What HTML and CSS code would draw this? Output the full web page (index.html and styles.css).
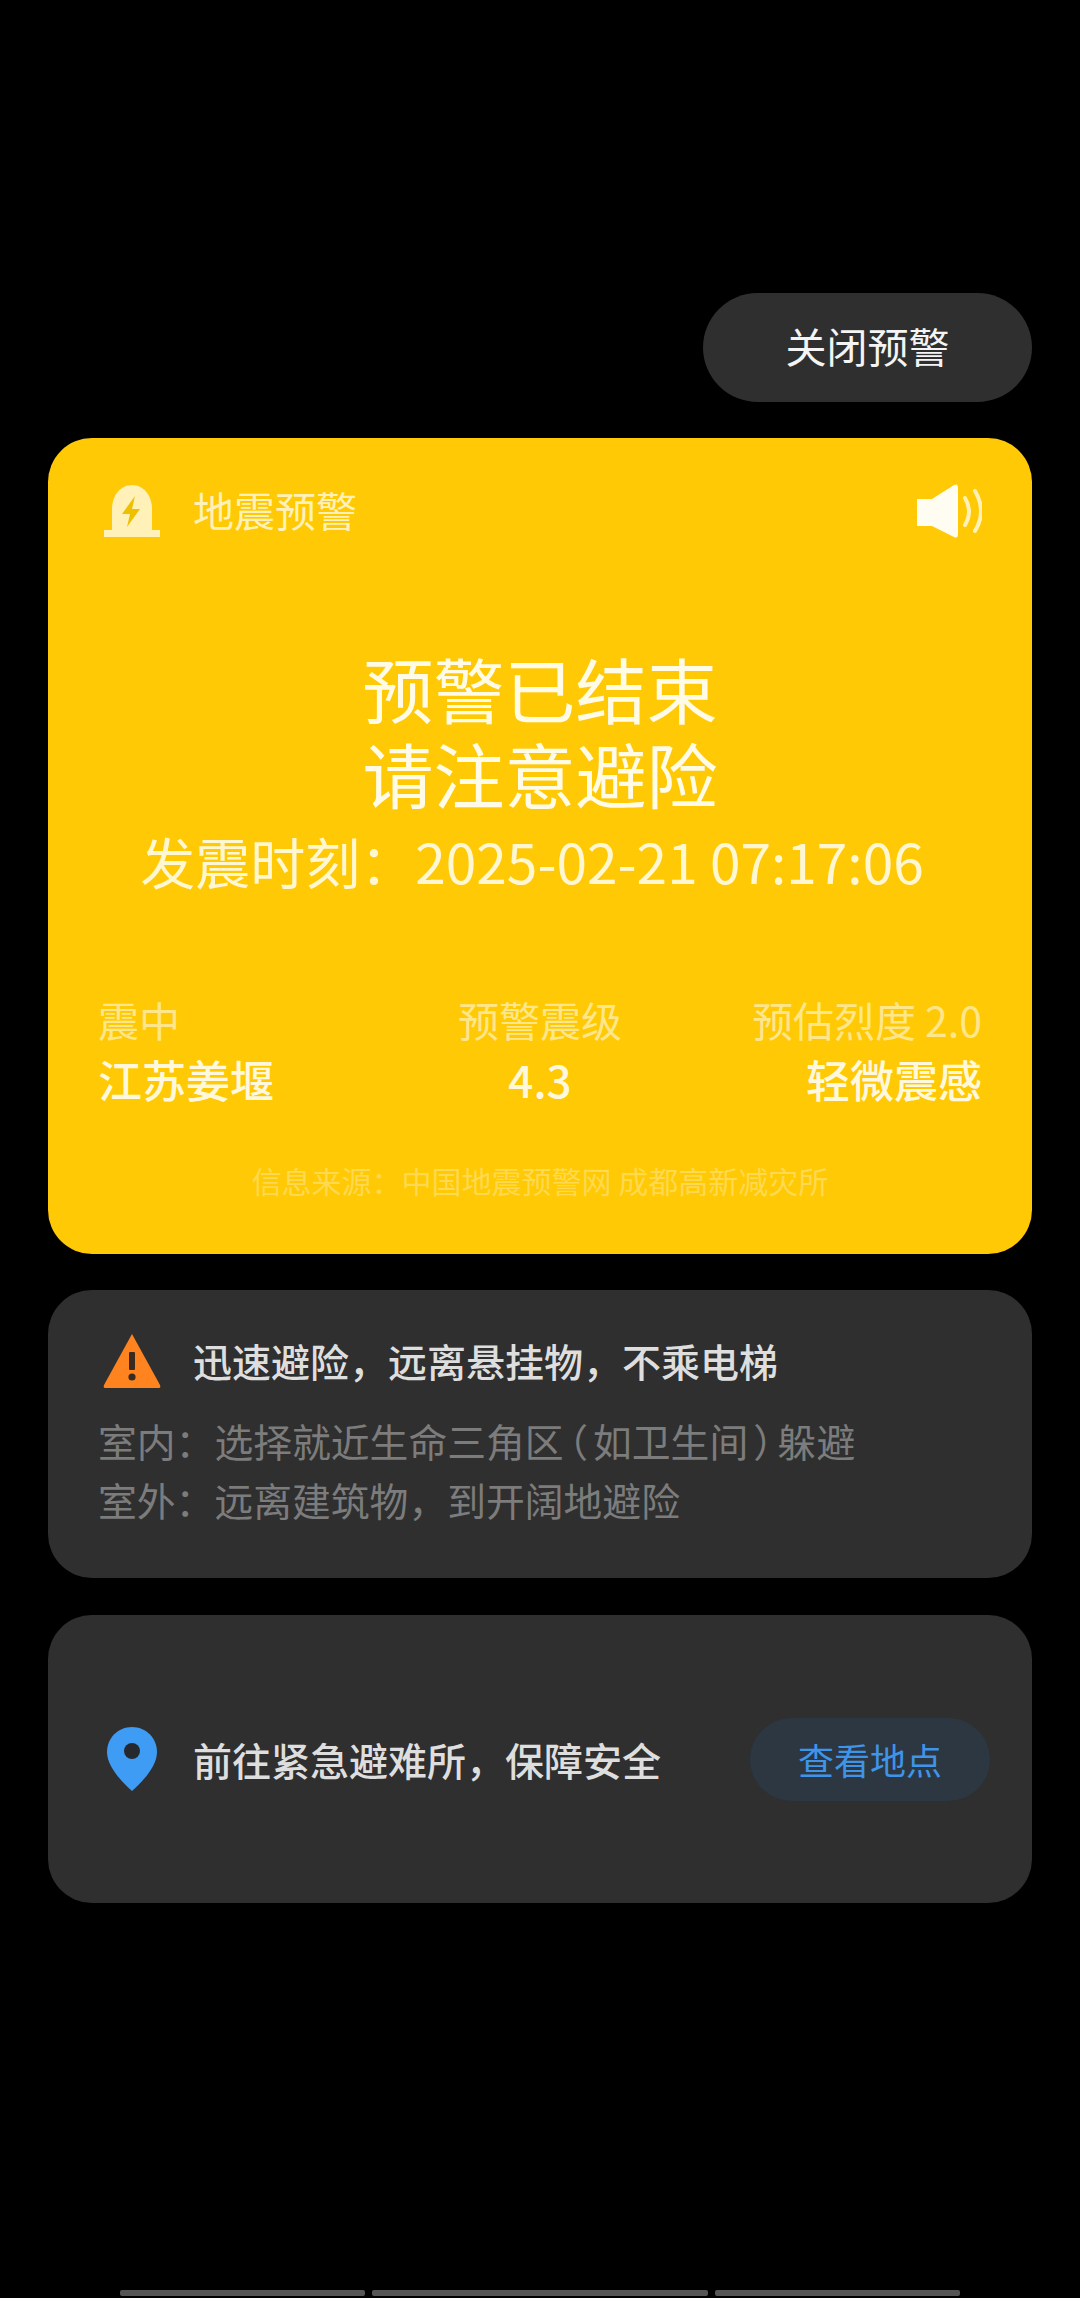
FILE: index.html
```html
<!DOCTYPE html>
<html lang="zh-CN">
<head>
    <meta charset="UTF-8">
    <meta name="viewport" content="width=device-width, initial-scale=1.0">
    <title>地震预警</title>
    <link rel="stylesheet" href="styles.css">
</head>
<body>
    <div class="page">
        <div class="close-row">
            <div class="close-btn">关闭预警</div>
        </div>

        <div class="alert-card">
            <div class="alert-head">
                <div class="alert-brand">
                    <div class="icon-box">
                        <svg width="56" height="52" viewBox="0 0 56 52">
                            <path fill="#fff1b8" d="M8 46V24C8 11 16 0 28 0s20 11 20 24v22z"/>
                            <rect fill="#fff1b8" y="45" width="56" height="7"/>
                            <path fill="#efc000" d="M31 11 18 29h8l-3 13 13-18h-8z"/>
                        </svg>
                    </div>
                    <span class="alert-name">地震预警</span>
                </div>
                <svg class="speaker" width="66" height="54" viewBox="0 0 66 54">
                    <path fill="#fffdf2" d="M1 15h15L38 1q4-2 4 3v46q0 5-4 3L16 42H1z"/>
                    <path fill="none" stroke="#fff1b8" stroke-width="4" stroke-linecap="round" d="M49 14q8 13 0 27M59 7q12 20 0 40"/>
                </svg>
            </div>

            <div class="alert-main">
                <h1>预警已结束<br>请注意避险</h1>
                <p class="alert-time">发震时刻：2025-02-21 07:17:06</p>
            </div>

            <div class="stats">
                <div class="stat">
                    <div class="stat-label">震中</div>
                    <div class="stat-value">江苏姜堰</div>
                </div>
                <div class="stat stat-center">
                    <div class="stat-label">预警震级</div>
                    <div class="stat-value">4.3</div>
                </div>
                <div class="stat stat-right">
                    <div class="stat-label">预估烈度 2.0</div>
                    <div class="stat-value">轻微震感</div>
                </div>
            </div>

            <div class="source">信息来源：中国地震预警网 成都高新减灾所</div>
        </div>

        <div class="info-card">
            <div class="info-title">
                <div class="icon-box">
                    <svg width="58" height="55" viewBox="0 0 58 55">
                        <path fill="#ff8420" d="M29 1 57 52q1 3-1 3H2q-2 0-1-3z"/>
                        <rect fill="#3a2b20" x="26" y="19" width="6" height="18" rx="1"/>
                        <circle fill="#3a2b20" cx="29" cy="44" r="3.6"/>
                    </svg>
                </div>
                <span>迅速避险，远离悬挂物，不乘电梯</span>
            </div>
            <div class="info-lines">
                <p>室内：选择就近生命三角区<span class="half">（</span>如卫生间<span class="half">）</span>躲避</p>
                <p>室外：远离建筑物，到开阔地避险</p>
            </div>
        </div>

        <div class="info-card shelter-card">
            <div class="info-title">
                <div class="icon-box">
                    <svg width="50" height="64" viewBox="0 0 50 64">
                        <path fill="#3f9cf5" d="M25 0c14 0 25 11 25 25 0 14-13 28-25 39C13 53 0 39 0 25 0 11 11 0 25 0z"/>
                        <circle fill="#25292d" cx="25" cy="24" r="8"/>
                    </svg>
                </div>
                <span>前往紧急避难所，保障安全</span>
            </div>
            <div class="place-btn">查看地点</div>
        </div>

        <div class="nav-bars">
            <span class="nav-short"></span>
            <span class="nav-long"></span>
            <span class="nav-short"></span>
        </div>
    </div>
</body>
</html>
```

FILE: styles.css
```css
* {
    box-sizing: border-box;
}

body {
    margin: 0;
    background: #000;
    font-family: "Noto Sans CJK SC", "Noto Sans", sans-serif;
}

.page {
    height: 2298px;
    padding: 293px 48px 0;
    display: flex;
    flex-direction: column;
    overflow: hidden;
}

/* Close button */
.close-row {
    display: flex;
    justify-content: flex-end;
    margin-bottom: 36px;
}

.close-btn {
    width: 329px;
    height: 109px;
    padding-bottom: 5px;
    border-radius: 55px;
    background: #2f2f2f;
    color: #f4f4f4;
    font-size: 41px;
    display: flex;
    align-items: center;
    justify-content: center;
}

/* Yellow alert card */
.alert-card {
    height: 816px;
    background: #ffc905;
    border-radius: 44px;
    padding: 44px 50px 0;
    color: #fff6d2;
    margin-bottom: 36px;
}

.alert-head {
    display: flex;
    justify-content: space-between;
    align-items: center;
    height: 58px;
}

.alert-brand {
    display: flex;
    align-items: center;
    gap: 27px;
}

.icon-box {
    width: 68px;
    flex-shrink: 0;
    display: flex;
    justify-content: center;
}

.alert-name {
    font-size: 41px;
    padding-bottom: 5px;
    color: #fff1b8;
}

.alert-main {
    text-align: center;
    margin-top: 105px;
}

.alert-main h1 {
    margin: 0;
    font-size: 71px;
    font-weight: 400;
    line-height: 85px;
    color: #fffbe6;
}

.alert-time {
    margin: 0;
    padding-right: 16px;
    font-size: 55px;
    line-height: 90px;
}

.stats {
    display: grid;
    grid-template-columns: 1fr 1fr 1fr;
    margin-top: 83px;
}

.stat-center {
    text-align: center;
}

.stat-right {
    text-align: right;
}

.stat-label {
    font-size: 41px;
    line-height: 62px;
    color: #ffe68a;
}

.stat-value {
    font-size: 44px;
    line-height: 58px;
    font-weight: 500;
    color: #fff8dc;
}

.source {
    text-align: center;
    font-size: 30px;
    color: #ffd94f;
    margin-top: 50px;
}

/* Dark cards */
.info-card {
    height: 288px;
    background: #2f2f2f;
    border-radius: 44px;
    padding: 42px 50px 0;
    margin-bottom: 37px;
}

.info-title {
    display: flex;
    align-items: center;
    gap: 27px;
    font-size: 39px;
    font-weight: 500;
    color: #dedede;
}

.info-lines {
    margin-top: 23px;
}

.info-lines p {
    margin: 0;
    font-size: 38.8px;
    line-height: 59px;
    color: #7c7c7c;
}

/* the reference draws these brackets narrow */
.half {
    font-feature-settings: "halt";
    padding: 0 5px;
}

.shelter-card {
    display: flex;
    align-items: center;
    justify-content: space-between;
    padding: 0 42px 0 50px;
}

.place-btn {
    width: 240px;
    height: 83px;
    border-radius: 42px;
    background: #2c3742;
    color: #3f94e8;
    font-size: 36px;
    display: flex;
    align-items: center;
    justify-content: center;
}

/* Bottom bars */
.nav-bars {
    display: flex;
    gap: 7px;
    margin: auto 72px 2px;
    height: 6px;
}

.nav-bars span {
    background: #555;
    border-radius: 2px;
}

.nav-short {
    width: 245px;
}

.nav-long {
    width: 336px;
}
```
